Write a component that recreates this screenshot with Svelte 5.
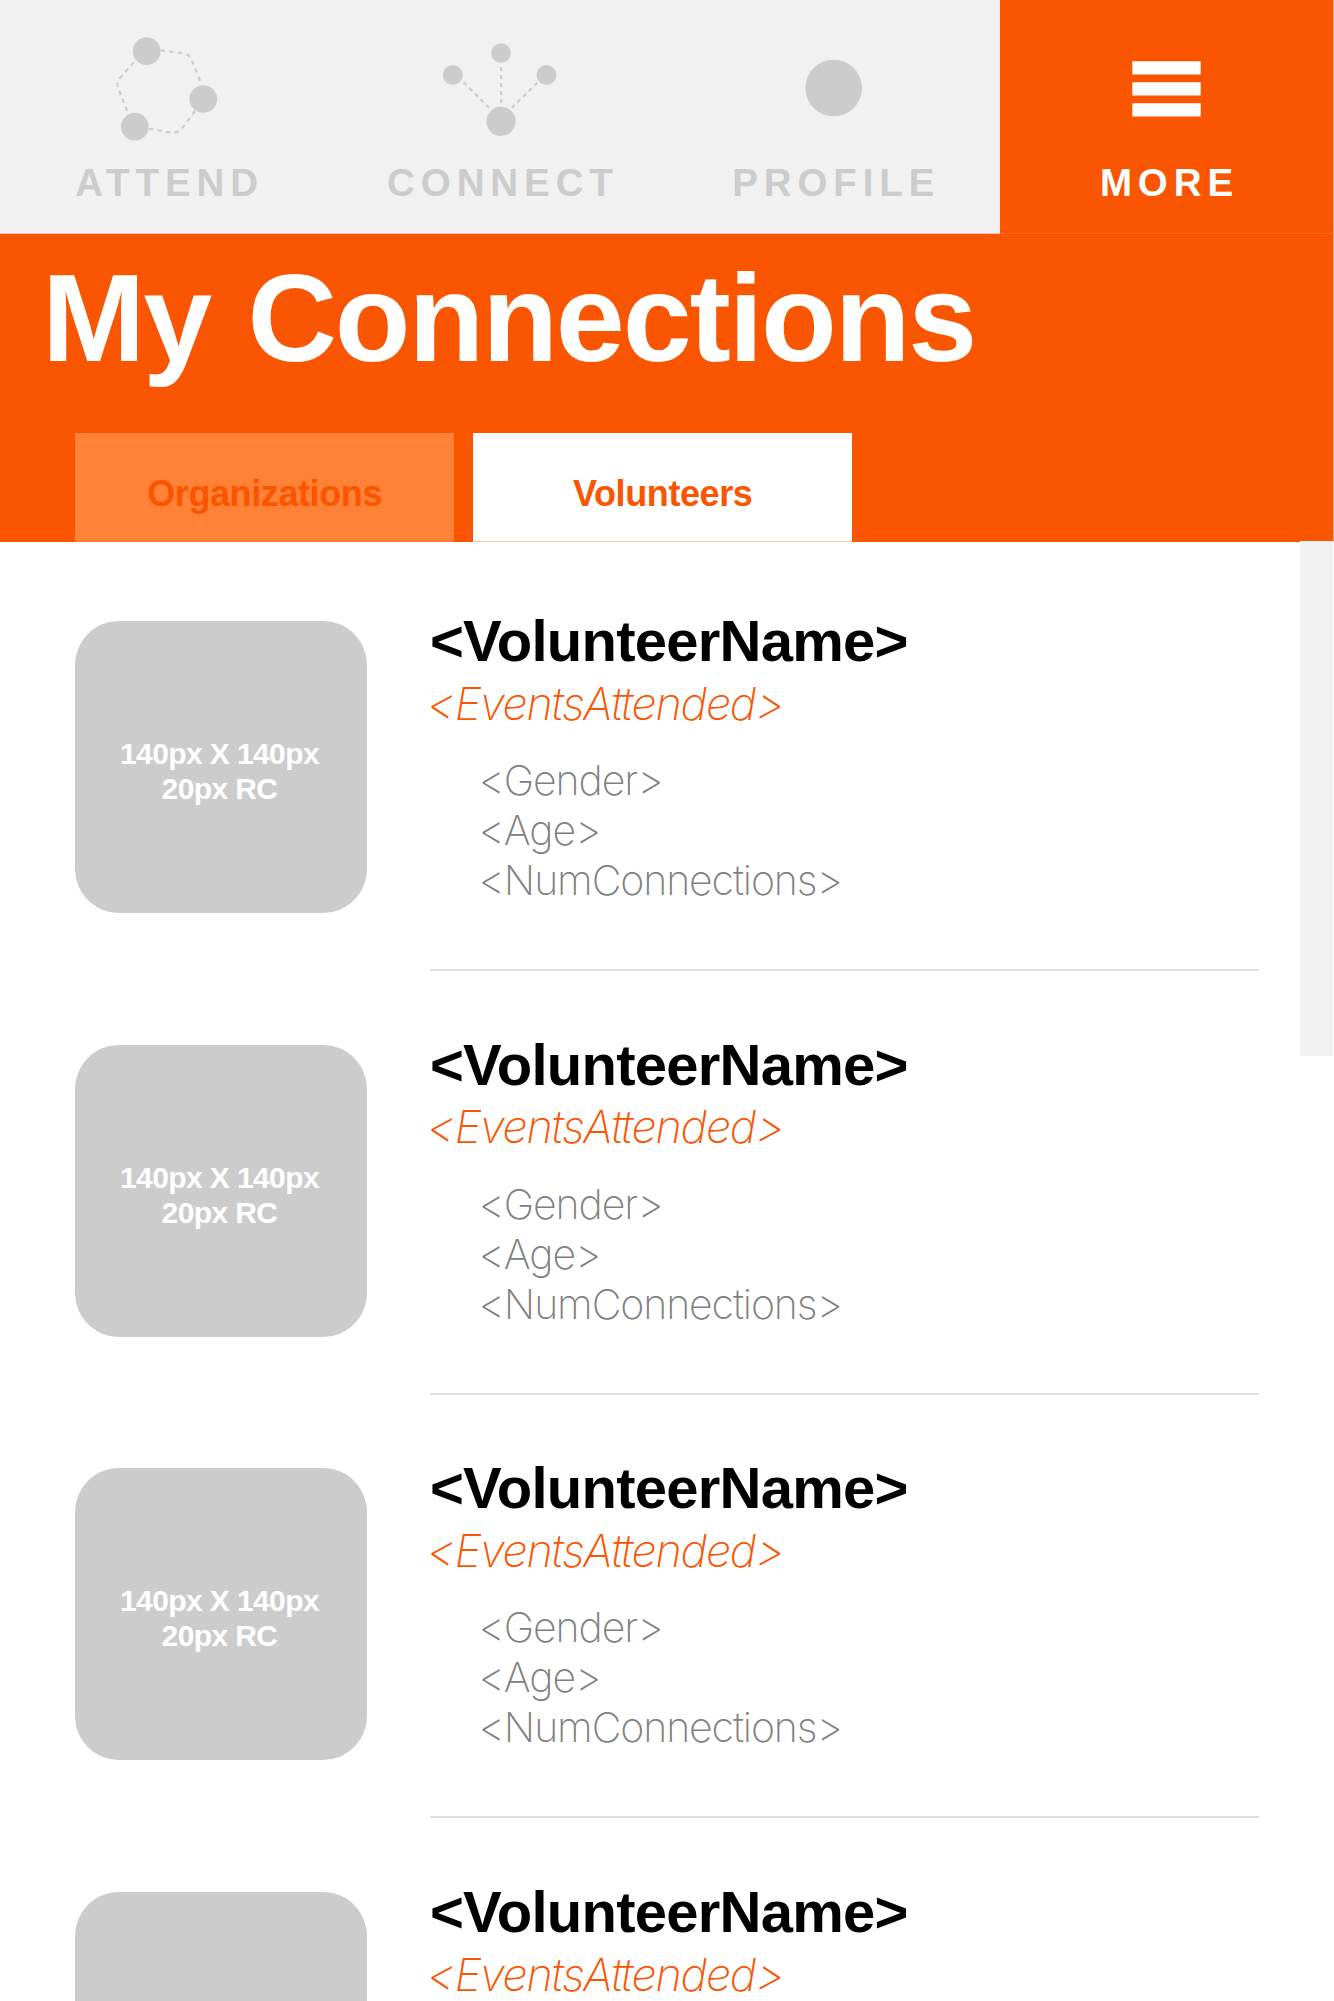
<script>
  // The last row only peeks in at the bottom edge, so it carries just its heading lines.
  const volunteers = [
    { id: 1, full: true },
    { id: 2, full: true },
    { id: 3, full: true },
    { id: 4, full: false },
  ];
</script>

<div class="screen">
  <nav class="nav">
    <div class="item">
      <svg class="icon" viewBox="-180 -60 1000 480">
        <g class="dashes">
          <path d="M302 91 L370 100 Q388 103 394 118 L424 192" />
          <path d="M405 273 L365 326 Q352 340 335 338 L265 326" />
          <path d="M201 273 L173 200 Q169 187 180 174 L226 122" />
        </g>
        <circle cx="260" cy="93.500" r="41.500" />
        <circle cx="430" cy="237" r="41.500" />
        <circle cx="224.500" cy="320" r="41.500" />
      </svg>
      <span class="label">ATTEND</span>
    </div>
    <div class="item">
      <svg class="icon" viewBox="-110 -60 1000 480">
        <g class="dashes">
          <path d="M394.500 141 V248" />
          <path d="M282 187 L358 263" />
          <path d="M503 188 L427 263" />
        </g>
        <circle cx="249.500" cy="165" r="30" />
        <circle cx="394" cy="99" r="29.500" />
        <circle cx="530.500" cy="165" r="30" />
        <circle cx="394" cy="304" r="44" />
      </svg>
      <span class="label">CONNECT</span>
    </div>
    <div class="item">
      <svg class="icon" viewBox="0 0 333.330 160">
        <circle cx="166.700" cy="88" r="28.300" />
      </svg>
      <span class="label">PROFILE</span>
    </div>
    <div class="item active">
      <svg class="icon" viewBox="0 0 333 160">
        <path d="M132.300 61.300h68.400v13.300h-68.400zM132.300 82.300h68.400v13.300h-68.400zM132.300 103.300h68.400v13.300h-68.400z" />
      </svg>
      <span class="label">MORE</span>
    </div>
  </nav>

  <header class="header">
    <h1>My Connections</h1>
    <div class="tabs">
      <div class="tab">Organizations</div>
      <div class="tab selected">Volunteers</div>
    </div>
  </header>

  <main class="list">
    {#each volunteers as { id, full } (id)}
      <article class="row">
        <div class="avatar">
          {#if full}<span>140px X 140px</span><span>20px RC</span>{/if}
        </div>
        <div class="info">
          <h2>&lt;VolunteerName&gt;</h2>
          <p class="events">&lt;EventsAttended&gt;</p>
          {#if full}
            <ul>
              <li>&lt;Gender&gt;</li>
              <li>&lt;Age&gt;</li>
              <li>&lt;NumConnections&gt;</li>
            </ul>
          {/if}
        </div>
      </article>
    {/each}
    <div class="scrollbar"></div>
  </main>
</div>

<style>
  :global(body) {
    margin: 0;
    background: #fff;
  }
  .screen {
    width: 1334px;
    height: 2001px;
    overflow: hidden;
    display: flex;
    flex-direction: column;
    background: #fff;
    font-family: "Liberation Sans", Arial, sans-serif;
  }
  .nav {
    flex: none;
    box-sizing: border-box;
    height: 234px;
    display: grid;
    grid-template-columns: 333.33px 333.33px 333.34px 1fr;
    background: #f1f1f1;
    border-bottom: 1px solid #d8c8c0;
  }
  .item {
    display: flex;
    flex-direction: column;
    align-items: center;
    color: #ccc;
  }
  .item.active {
    background: #fa5500;
    color: #fff;
    border-right: 1px solid #fda87c;
    box-shadow: 0 1px #fb6a20;
  }
  .icon {
    width: 100%;
    height: 160px;
    fill: currentColor;
  }
  .dashes {
    fill: none;
    stroke: currentColor;
    stroke-width: 6.5;
    stroke-dasharray: 13 13;
  }
  .item:nth-child(2) .dashes {
    stroke-width: 7;
    stroke-dasharray: 12 12;
  }
  .label {
    margin: 1px -5.9px 0 0;
    font-size: 38.5px;
    font-weight: 700;
    line-height: 44px;
    letter-spacing: 5.9px;
  }
  .header {
    flex: none;
    box-sizing: border-box;
    height: 308px;
    display: flex;
    flex-direction: column;
    justify-content: space-between;
    padding: 14px 0 0;
    background: #fa5500;
    color: #fff;
    border-right: 1px solid #fda87c;
  }
  h1 {
    margin: 0 0 0 42px;
    font-size: 124px;
    line-height: 140px;
    letter-spacing: -2.1px;
    word-spacing: 5px;
  }
  .tabs {
    display: flex;
    gap: 19px;
    padding-left: 75px;
    height: 109px;
  }
  .tab {
    box-sizing: border-box;
    width: 379.2px;
    padding-top: 11px;
    background: #ff8237;
    color: #fa5500;
    border-bottom: 1px solid #fc7a38;
    font-size: 36px;
    font-weight: 700;
    line-height: 100px;
    letter-spacing: -0.4px;
    text-align: center;
  }
  .tab.selected {
    background: #fff;
    border-color: #fdc4aa;
  }
  .list {
    position: relative;
    flex: 1;
    min-height: 0;
    padding-top: 5.3px;
  }
  .row {
    box-sizing: border-box;
    height: 423.67px;
    display: flex;
    padding-left: 75px;
  }
  .avatar {
    flex: none;
    box-sizing: border-box;
    width: 292px;
    height: 292px;
    margin: 73.7px 63px 0 0;
    padding: 115px 3px 0 0;
    border-radius: 44px;
    background: #ccc;
    color: #fff;
    display: flex;
    flex-direction: column;
    align-items: center;
    font-size: 30px;
    font-weight: 700;
    line-height: 35px;
    letter-spacing: -0.6px;
  }
  .info {
    box-sizing: border-box;
    width: 828.7px;
    padding-top: 68.7px;
    border-bottom: 2px solid #e0e0e0;
  }
  h2 {
    margin: 0;
    font-size: 58px;
    line-height: 50px;
    letter-spacing: -0.75px;
    color: #000;
  }
  .events {
    margin: 12.6px 0 0 -3px;
    font-family: Inter, sans-serif;
    font-size: 45px;
    font-style: italic;
    font-weight: 200;
    line-height: 50px;
    letter-spacing: -1.3px;
    color: #fa5500;
  }
  ul {
    list-style: none;
    margin: 26.5px 0 0;
    padding: 0 0 0 48.5px;
    font-family: Inter, sans-serif;
    font-size: 41px;
    font-weight: 250;
    line-height: 50px;
    letter-spacing: -1.1px;
    color: #808080;
  }
  .scrollbar {
    position: absolute;
    top: -1px;
    right: 1px;
    width: 33px;
    height: 515px;
    background: #f1f1f1;
  }
</style>
